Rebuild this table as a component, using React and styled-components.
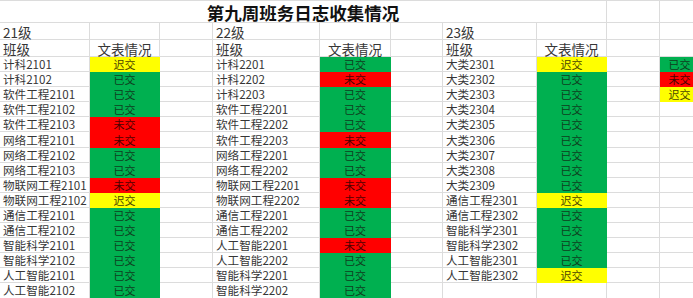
import React from 'react';
import styled, { createGlobalStyle } from 'styled-components';

const GlobalStyle = createGlobalStyle`
  html, body {
    margin: 0;
    padding: 0;
    background: #ffffff;
    overflow: hidden;
  }
`

const fills = {
  done: { bg: '#00b050', fg: '#0f3d1e', text: '已交' },
  missing: { bg: '#ff0000', fg: '#4d0000', text: '未交' },
  late: { bg: '#ffff00', fg: '#4a4300', text: '迟交' },
}

const cohorts = [
  {
    label: '21级',
    rows: [
      ['计科2101', 'late'],
      ['计科2102', 'done'],
      ['软件工程2101', 'done'],
      ['软件工程2102', 'done'],
      ['软件工程2103', 'missing'],
      ['网络工程2101', 'missing'],
      ['网络工程2102', 'done'],
      ['网络工程2103', 'done'],
      ['物联网工程2101', 'missing'],
      ['物联网工程2102', 'late'],
      ['通信工程2101', 'done'],
      ['通信工程2102', 'done'],
      ['智能科学2101', 'done'],
      ['智能科学2102', 'done'],
      ['人工智能2101', 'done'],
      ['人工智能2102', 'done'],
    ],
  },
  {
    label: '22级',
    rows: [
      ['计科2201', 'done'],
      ['计科2202', 'missing'],
      ['计科2203', 'done'],
      ['软件工程2201', 'done'],
      ['软件工程2202', 'done'],
      ['软件工程2203', 'missing'],
      ['网络工程2201', 'done'],
      ['网络工程2202', 'done'],
      ['物联网工程2201', 'missing'],
      ['物联网工程2202', 'missing'],
      ['通信工程2201', 'done'],
      ['通信工程2202', 'done'],
      ['人工智能2201', 'missing'],
      ['人工智能2202', 'done'],
      ['智能科学2201', 'done'],
      ['智能科学2202', 'done'],
    ],
  },
  {
    label: '23级',
    rows: [
      ['大类2301', 'late'],
      ['大类2302', 'done'],
      ['大类2303', 'done'],
      ['大类2304', 'done'],
      ['大类2305', 'done'],
      ['大类2306', 'done'],
      ['大类2307', 'done'],
      ['大类2308', 'done'],
      ['大类2309', 'done'],
      ['通信工程2301', 'late'],
      ['通信工程2302', 'done'],
      ['智能科学2301', 'done'],
      ['智能科学2302', 'done'],
      ['人工智能2301', 'done'],
      ['人工智能2302', 'late'],
    ],
  },
]

// legend column on the far right
const legend = ['done', 'missing', 'late']

const Sheet = styled.div`
  display: grid;
  grid-template-columns: 90px 70px 53px 107px 71px 52px 94px 70px 53px 40px;
  grid-template-rows: 22px 17px 17px repeat(16, 15.1px);
  border-top: 1px solid #dcdcdc;
  font-family: "Noto Sans CJK SC", "Liberation Sans", sans-serif;
  color: #363636;
`

const Cell = styled.div`
  box-sizing: border-box;
  display: flex;
  align-items: center;
  justify-content: ${p => (p.$center ? 'center' : 'flex-start')};
  padding-left: ${p => (p.$center ? 0 : 3)}px;
  padding-top: ${p => (p.$head ? 2 : 0)}px;
  border-right: 1px solid ${p => (p.$fill ? fills[p.$fill].bg : '#dcdcdc')};
  border-bottom: 1px solid ${p => (p.$fill ? fills[p.$fill].bg : '#dcdcdc')};
  background: ${p => (p.$fill ? fills[p.$fill].bg : 'transparent')};
  color: ${p => (p.$fill ? fills[p.$fill].fg : 'inherit')};
  font-size: ${p => (p.$head ? 13.5 : p.$fill ? 11 : 11.6)}px;
  line-height: 14px;
  white-space: nowrap;
`

const Title = styled.div`
  grid-column: span 8;
  box-sizing: border-box;
  display: flex;
  align-items: center;
  justify-content: center;
  padding-top: 2px;
  border-right: 1px solid #dcdcdc;
  border-bottom: 1px solid #dcdcdc;
  font-size: 17.5px;
  font-weight: 700;
  color: #111111;
  line-height: 19px;
`

const Status = ({ fill }) => (
  <Cell $center $fill={fill}>{fills[fill].text}</Cell>
)

const DataRow = ({ index }) => (
  <>
    {cohorts.map(c => {
      const row = c.rows[index]
      return (
        <React.Fragment key={c.label}>
          <Cell>{row ? row[0] : ''}</Cell>
          {row ? <Status fill={row[1]} /> : <Cell />}
          <Cell />
        </React.Fragment>
      )
    })}
    {legend[index] ? <Status fill={legend[index]} /> : <Cell />}
  </>
)

const App = () => {
  const indexes = Array.from({ length: 16 }, (_, i) => i)

  return (
    <>
      <GlobalStyle />
      <Sheet>
        <Title>第九周班务日志收集情况</Title>
        <Cell />
        <Cell />

        {cohorts.map(c => (
          <React.Fragment key={c.label}>
            <Cell $head>{c.label}</Cell>
            <Cell />
            <Cell />
          </React.Fragment>
        ))}
        <Cell />

        {cohorts.map(c => (
          <React.Fragment key={c.label}>
            <Cell $head>班级</Cell>
            <Cell $head $center>文表情况</Cell>
            <Cell />
          </React.Fragment>
        ))}
        <Cell />

        {indexes.map(i => (
          <DataRow key={i} index={i} />
        ))}
      </Sheet>
    </>
  )
}

export default App;
